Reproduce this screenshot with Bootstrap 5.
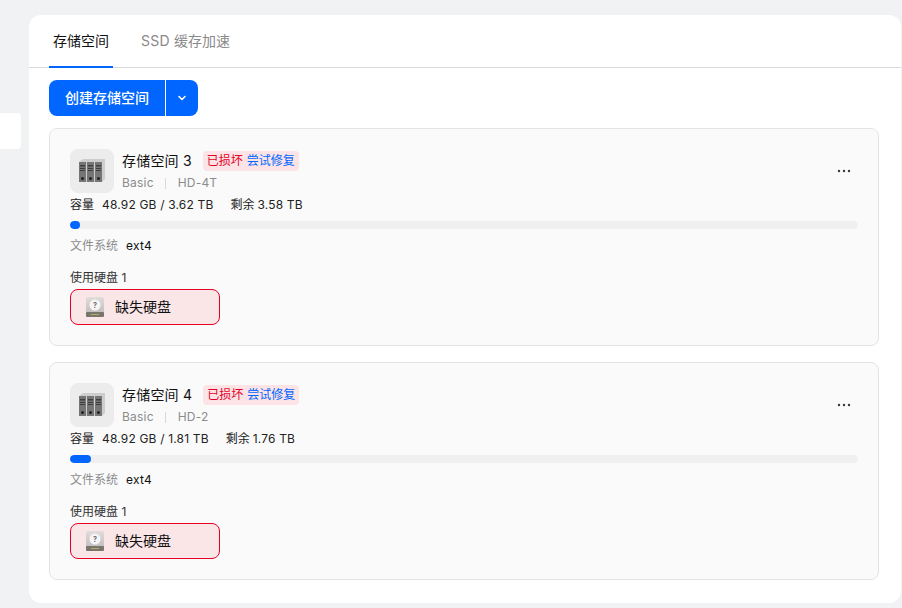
<!DOCTYPE html>
<html lang="zh">
<head>
<meta charset="utf-8">
<title>存储空间</title>
<link href="https://cdn.jsdelivr.net/npm/bootstrap@5.3.0/dist/css/bootstrap.min.css" rel="stylesheet">
<style>
html,body{height:100%;overflow:hidden}
body{background:#f1f2f4;font-family:Inter,"Noto Sans CJK SC",sans-serif;color:#1a1a1a;font-size:12px;line-height:16px}
.shell{width:902px;height:608px;padding:15px 1px 5px 0;gap:8px}
.side-stub{width:21px;height:36px;margin-top:98px;background:#fff;border-radius:0 4px 4px 0;flex:none}
.main-panel{width:872px;background:#fff;border-radius:12px;overflow:hidden}
.tabbar{height:53px;border-bottom:1px solid #d9dadd;padding-left:20px;gap:20px;margin:0;list-style:none}
.tab-item{height:53px;padding:0 4px;font-size:14px;line-height:52px;color:#8a8a8a;white-space:nowrap;margin-right:4px}
.tab-item.on{color:#111;border-bottom:2px solid #0066ff}
.tab-item .lat{letter-spacing:.3px}
.content{padding:12px 22px 0 20px}
.split{height:36px;margin-bottom:12px}
.split .btn{background:#0066ff;border:0;color:#fff;height:36px;font-size:14px;font-weight:500;line-height:36px;padding:0;border-radius:8px}
.split .b-main{width:116px;border-radius:8px 0 0 8px}
.split .b-caret{width:32px;border-radius:0 8px 8px 0;margin-left:1px}
.pool{height:218px;background:#fafafa;border:1px solid #e3e4e6;border-radius:8px;padding:20px;margin-bottom:16px}
.pool-ico{width:44px;height:44px;border-radius:8px;background:#ececec;flex:none}
.pool-name{font-size:14px;line-height:20px;color:#111;letter-spacing:.2px}
.state{height:20px;line-height:20px;background:#fce4e6;border-radius:4px;padding:0 4px;margin-left:11px;font-size:12px;color:#e60026}
.state a{color:#0066ff;text-decoration:none;margin-left:4px}
.meta{color:#8c8c8c;line-height:16px;margin-top:4px;letter-spacing:.2px}
.sep{width:1px;height:11px;background:#d9d9d9;margin:0 12px 0 11px}
.more-dots{margin-right:7px}
.cap{margin-top:4px;color:#222;line-height:16px}
.cap .num{letter-spacing:.17px}
.cap .gap-l{margin-left:8px}
.cap .gap-s{margin-left:3px}
.cap .gap-r{margin-left:17px}
.meter{height:8px;background:#f0f0f0;border-radius:4px;margin-top:8px;overflow:hidden}
.meter-fill{height:8px;background:#0066ff;border-radius:4px}
.fs{margin-top:9px;color:#8c8c8c}
.fs span{color:#111;margin-left:8px;letter-spacing:.2px}
.used{margin-top:16px;color:#333}
.missing{width:150px;height:36px;margin-top:3px;background:#fae5e7;border:1px solid #e60026;border-radius:8px;padding-left:14px;font-size:14px;color:#111;gap:10px}
</style>
</head>
<body>
<div class="shell d-flex align-items-start">
  <div class="side-stub"></div>
  <div class="main-panel h-100">
    <ul class="tabbar d-flex">
      <li class="tab-item on">存储空间</li>
      <li class="tab-item"><span class="lat">SSD</span> 缓存加速</li>
    </ul>
    <div class="content">
      <div class="split d-flex">
        <button class="btn b-main" type="button">创建存储空间</button>
        <button class="btn b-caret d-flex align-items-center justify-content-center" type="button" aria-label="更多">
          <svg width="10" height="10" viewBox="0 0 10 10"><path d="M2 3.500 5 6.500 8 3.500" fill="none" stroke="#fff" stroke-width="1.500" stroke-linecap="round" stroke-linejoin="round"/></svg>
        </button>
      </div>

      <section class="pool">
        <div class="d-flex align-items-center">
          <div class="pool-ico d-flex align-items-center justify-content-center">
            <svg width="28" height="24" viewBox="0 0 28 24"><path d="M1 3 5 0H27V20L24 23H1Z" fill="#cdcdcd"/><g fill="#757575"><rect x="1" y="3" width="7" height="20"/><rect x="9" y="3" width="7" height="20"/><rect x="17" y="3" width="7" height="20"/></g><g fill="#3f3f3f"><rect x="2" y="6" width="5" height="1.500"/><rect x="10" y="6" width="5" height="1.500"/><rect x="18" y="6" width="5" height="1.500"/><rect x="2" y="9" width="5" height="1"/><rect x="10" y="9" width="5" height="1"/><rect x="18" y="9" width="5" height="1"/><rect x="2" y="11" width="5" height="1"/><rect x="10" y="11" width="5" height="1"/><rect x="18" y="11" width="5" height="1"/><circle cx="4.500" cy="19.500" r="1.500" fill="#222"/><circle cx="12.500" cy="19.500" r="1.500" fill="#222"/><circle cx="20.500" cy="19.500" r="1.500" fill="#222"/></g></svg>
          </div>
          <div class="ms-2 flex-grow-1">
            <div class="d-flex align-items-center">
              <span class="pool-name">存储空间 3</span>
              <span class="state">已损坏<a href="#">尝试修复</a></span>
            </div>
            <div class="meta d-flex align-items-center">Basic<span class="sep"></span>HD-4T</div>
          </div>
          <svg class="more-dots" width="14" height="4" viewBox="0 0 14 4"><g fill="#3a3a3a"><circle cx="2" cy="2" r="1.200"/><circle cx="7" cy="2" r="1.200"/><circle cx="12" cy="2" r="1.200"/></g></svg>
        </div>
        <div class="cap">容量<span class="gap-l num">48.92 GB / 3.62 TB</span><span class="gap-r">剩余</span><span class="gap-s num">3.58 TB</span></div>
        <div class="meter"><div class="meter-fill" style="width:10px"></div></div>
        <div class="fs">文件系统<span>ext4</span></div>
        <div class="used">使用硬盘 1</div>
        <div class="missing d-flex align-items-center">
          <svg width="20" height="20" viewBox="0 0 20 20"><defs><linearGradient id="hd1" x1="0" y1="0" x2="0" y2="1"><stop offset="0" stop-color="#e2dddd"/><stop offset="1" stop-color="#bdb9b9"/></linearGradient></defs><rect x="1" y="0" width="18" height="19" rx="2" fill="url(#hd1)"/><rect x="1" y="15" width="18" height="5" rx="1" fill="#77756c"/><rect x="6" y="17" width="8" height="1" fill="#b5a95e"/><circle cx="10" cy="8" r="5.500" fill="#f6f4f4"/><text x="10" y="10.500" font-size="7" font-weight="700" text-anchor="middle" fill="#666">?</text></svg>
          <span>缺失硬盘</span>
        </div>
      </section>

      <section class="pool">
        <div class="d-flex align-items-center">
          <div class="pool-ico d-flex align-items-center justify-content-center">
            <svg width="28" height="24" viewBox="0 0 28 24"><path d="M1 3 5 0H27V20L24 23H1Z" fill="#cdcdcd"/><g fill="#757575"><rect x="1" y="3" width="7" height="20"/><rect x="9" y="3" width="7" height="20"/><rect x="17" y="3" width="7" height="20"/></g><g fill="#3f3f3f"><rect x="2" y="6" width="5" height="1.500"/><rect x="10" y="6" width="5" height="1.500"/><rect x="18" y="6" width="5" height="1.500"/><rect x="2" y="9" width="5" height="1"/><rect x="10" y="9" width="5" height="1"/><rect x="18" y="9" width="5" height="1"/><rect x="2" y="11" width="5" height="1"/><rect x="10" y="11" width="5" height="1"/><rect x="18" y="11" width="5" height="1"/><circle cx="4.500" cy="19.500" r="1.500" fill="#222"/><circle cx="12.500" cy="19.500" r="1.500" fill="#222"/><circle cx="20.500" cy="19.500" r="1.500" fill="#222"/></g></svg>
          </div>
          <div class="ms-2 flex-grow-1">
            <div class="d-flex align-items-center">
              <span class="pool-name">存储空间 4</span>
              <span class="state">已损坏<a href="#">尝试修复</a></span>
            </div>
            <div class="meta d-flex align-items-center">Basic<span class="sep"></span>HD-2</div>
          </div>
          <svg class="more-dots" width="14" height="4" viewBox="0 0 14 4"><g fill="#3a3a3a"><circle cx="2" cy="2" r="1.200"/><circle cx="7" cy="2" r="1.200"/><circle cx="12" cy="2" r="1.200"/></g></svg>
        </div>
        <div class="cap">容量<span class="gap-l num">48.92 GB / 1.81 TB</span><span class="gap-r">剩余</span><span class="gap-s num">1.76 TB</span></div>
        <div class="meter"><div class="meter-fill" style="width:21px"></div></div>
        <div class="fs">文件系统<span>ext4</span></div>
        <div class="used">使用硬盘 1</div>
        <div class="missing d-flex align-items-center">
          <svg width="20" height="20" viewBox="0 0 20 20"><defs><linearGradient id="hd2" x1="0" y1="0" x2="0" y2="1"><stop offset="0" stop-color="#e2dddd"/><stop offset="1" stop-color="#bdb9b9"/></linearGradient></defs><rect x="1" y="0" width="18" height="19" rx="2" fill="url(#hd2)"/><rect x="1" y="15" width="18" height="5" rx="1" fill="#77756c"/><rect x="6" y="17" width="8" height="1" fill="#b5a95e"/><circle cx="10" cy="8" r="5.500" fill="#f6f4f4"/><text x="10" y="10.500" font-size="7" font-weight="700" text-anchor="middle" fill="#666">?</text></svg>
          <span>缺失硬盘</span>
        </div>
      </section>
    </div>
  </div>
</div>
<script src="https://cdn.jsdelivr.net/npm/bootstrap@5.3.0/dist/js/bootstrap.bundle.min.js"></script>
</body>
</html>
